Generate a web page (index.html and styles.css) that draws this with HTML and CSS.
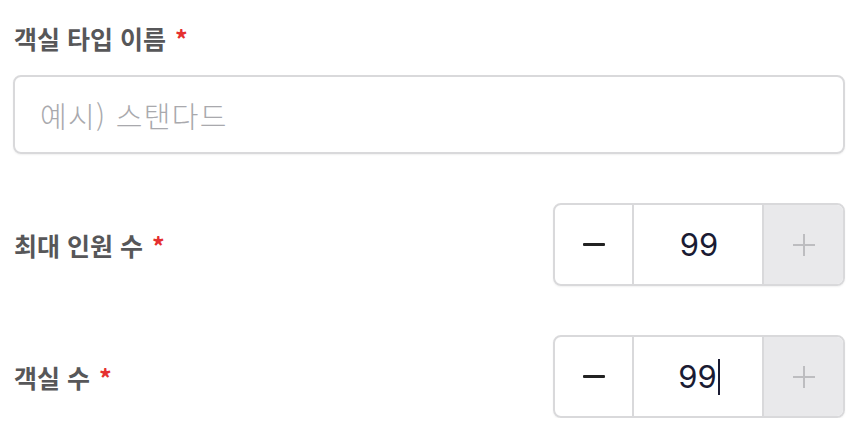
FILE: index.html
```html
<!DOCTYPE html>
<html lang="ko">
<head>
<meta charset="utf-8">
<link rel="stylesheet" href="styles.css">
</head>
<body>
<form class="form">
  <div class="field">
    <label class="label">객실 타입 이름 <span class="req">*</span></label>
    <div class="text-input"><span class="placeholder">예시) 스탠다드</span></div>
  </div>
  <div class="row row-first">
    <label class="label">최대 인원 수 <span class="req">*</span></label>
    <div class="stepper">
      <div class="step minus"><span class="minus-bar"></span></div>
      <div class="value">99</div>
      <div class="step plus disabled">
        <svg width="24" height="24" viewBox="0 0 24 24"><path d="M12 1v22M1 12h22" stroke="#bdbdc0" stroke-width="2" fill="none"/></svg>
      </div>
    </div>
  </div>
  <div class="row">
    <label class="label">객실 수 <span class="req">*</span></label>
    <div class="stepper">
      <div class="step minus"><span class="minus-bar"></span></div>
      <div class="value"><span class="val-text">99</span><span class="caret"></span></div>
      <div class="step plus disabled">
        <svg width="24" height="24" viewBox="0 0 24 24"><path d="M12 1v22M1 12h22" stroke="#bdbdc0" stroke-width="2" fill="none"/></svg>
      </div>
    </div>
  </div>
</form>
</body>
</html>
```

FILE: styles.css
```css
* { box-sizing: border-box; }
html, body { margin: 0; padding: 0; background: #fff; }
body {
  font-family: "Noto Sans CJK KR", "Noto Sans", sans-serif;
}
.form {
  width: 861px;
  padding: 19px 16px 0 13px;
}
.field { display: flex; flex-direction: column; gap: 18px; }
.label {
  font-size: 25px;
  font-weight: 700;
  color: #575759;
  line-height: 38px;
  padding-left: 1px;
}
.req { color: #e5302f; margin-left: 2px; }
.text-input {
  height: 79px;
  border: 2px solid #d9d9db;
  border-radius: 8px;
  box-shadow: 0 1px 2px rgba(0,0,0,0.06);
  display: flex;
  align-items: center;
  padding-left: 25px;
}
.placeholder {
  font-size: 29px;
  font-weight: 300;
  color: #a9a9ad;
  letter-spacing: 1.3px;
}
.row {
  display: flex;
  justify-content: space-between;
  align-items: center;
  margin-top: 49px;
}
.stepper {
  width: 292px;
  height: 83px;
  border: 2px solid #d9d9db;
  border-radius: 8px;
  display: flex;
  overflow: hidden;
  box-shadow: 0 1px 2px rgba(0,0,0,0.06);
}
.step {
  display: flex;
  align-items: center;
  justify-content: center;
}
.minus { width: 79px; border-right: 2px solid #d9d9db; }
.minus-bar { width: 22px; height: 3px; background: #222; border-radius: 1px; }
.value {
  flex: 1;
  display: flex;
  align-items: center;
  justify-content: center;
  font-family: Inter, "Noto Sans", sans-serif;
  font-size: 31px;
  color: #1a1b33;
  padding-left: 2px;
}
.plus { width: 81px; background: #e9e9eb; border-left: 2px solid #d9d9db; }
.caret {
  width: 2px;
  height: 36px;
  background: #1a1b33;
  margin-left: 1px;
}
```
